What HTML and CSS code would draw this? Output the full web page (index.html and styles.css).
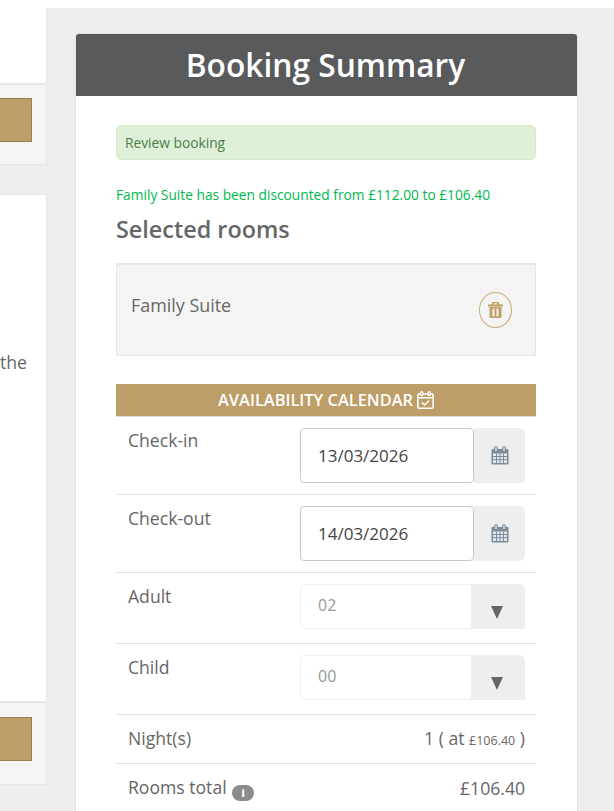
FILE: index.html
```html
<!DOCTYPE html>
<html lang="en">

<head>
    <meta charset="UTF-8" />
    <meta name="viewport" content="width=device-width, initial-scale=1.0" />
    <title>Booking Summary</title>
    <link rel="stylesheet" href="styles.css">
</head>

<body>

    <div class="page">
        <div class="rooms-col">
            <div class="room-card">
                <div class="room-body first"></div>
                <div class="room-foot"><a href="#" class="gold-btn"></a></div>
            </div>
            <div class="room-card second-card">
                <div class="room-body second"><p>the</p></div>
                <div class="room-foot last"><a href="#" class="gold-btn"></a></div>
            </div>
        </div>

        <div class="summary">
            <h1>Booking Summary</h1>

            <div class="summary-body">
                <div class="alert">Review booking</div>
                <p class="discount">Family Suite has been discounted from £112.00 to £106.40</p>
                <h2>Selected rooms</h2>

                <div class="selected-room">
                    <span>Family Suite</span>
                    <a href="#" class="trash">
                        <svg viewBox="0 0 15 16" width="15" height="16">
                            <path fill-rule="evenodd" d="M4.500 0h6l1 2.500h3.500v2H0v-2h3.500zM6 1.300 5.500 2.500h4L9 1.300z" fill="#c09f66" />
                            <path fill-rule="evenodd" d="M1.500 5h12v9.800a1.200 1.200 0 0 1-1.200 1.200H2.700a1.200 1.200 0 0 1-1.200-1.200zM4.500 6.500v8h2v-8zM8.500 6.500v8h2v-8z" fill="#c09f66" />
                        </svg>
                    </a>
                </div>

                <div class="calendar-title">
                    AVAILABILITY CALENDAR
                    <svg viewBox="0 0 17 18" width="17" height="18">
                        <rect x="0.800" y="3" width="15.400" height="14.200" rx="1.500" fill="none" stroke="#fff" stroke-width="1.600" />
                        <path d="M1 6.800h15" stroke="#fff" stroke-width="1.500" />
                        <rect x="3.700" y="0.700" width="2.100" height="4" rx="1" fill="#bd9e68" stroke="#fff" stroke-width="1.200" />
                        <rect x="11.200" y="0.700" width="2.100" height="4" rx="1" fill="#bd9e68" stroke="#fff" stroke-width="1.200" />
                        <path d="M4.800 11.500l2.700 2.500 4.700-4.500" fill="none" stroke="#fff" stroke-width="1.500" />
                    </svg>
                </div>

                <div class="row row-date">
                    <label>Check-in</label>
                    <div class="field">
                        <input type="text" value="13/03/2026" class="date-input" />
                        <span class="addon">
                            <svg width="18" height="19"><use href="#cal" /></svg>
                        </span>
                    </div>
                </div>

                <div class="row row-date">
                    <label>Check-out</label>
                    <div class="field">
                        <input type="text" value="14/03/2026" class="date-input" />
                        <span class="addon">
                            <svg width="18" height="19"><use href="#cal" /></svg>
                        </span>
                    </div>
                </div>

                <div class="row row-select">
                    <label>Adult</label>
                    <div class="select">
                        <span class="select-value">02</span>
                        <span class="select-arrow"></span>
                    </div>
                </div>

                <div class="row row-select">
                    <label>Child</label>
                    <div class="select">
                        <span class="select-value">00</span>
                        <span class="select-arrow"></span>
                    </div>
                </div>

                <div class="row row-total">
                    <span>Night(s)</span>
                    <span>1 ( at <small>£106.40</small> )</span>
                </div>

                <div class="row row-total no-line">
                    <span>Rooms total <i class="info">i</i></span>
                    <span>£106.40</span>
                </div>
            </div>
        </div>
    </div>

    <svg width="0" height="0" class="defs">
        <symbol id="cal" viewBox="0 0 18 19">
            <rect x="0.500" y="3" width="17" height="15.500" rx="1" fill="#7f8a94" />
            <path d="M2 7.500h14v9.500H2z" fill="#dfe9f3" />
            <path d="M2 10.500h14M2 13.700h14M5.500 7.500v9.500M9 7.500v9.500M12.500 7.500v9.500" stroke="#7f8a94" stroke-width="1" />
            <rect x="3.600" y="0.600" width="2.800" height="5" rx="1.200" fill="#c6d6e6" stroke="#7f8a94" stroke-width="1" />
            <rect x="11.600" y="0.600" width="2.800" height="5" rx="1.200" fill="#c6d6e6" stroke="#7f8a94" stroke-width="1" />
        </symbol>
    </svg>

</body>

</html>
```

FILE: styles.css
```css
* {
    box-sizing: border-box;
    font-family: 'Open Sans', 'Liberation Sans', sans-serif;
}

html,
body {
    margin: 0;
    height: 100%;
    overflow: hidden;
    background-color: white;
}

.page {
    display: flex;
    margin-top: 8px;
    height: 803px;
    background-color: #eeeeee;
    color: #666;
}

.defs {
    display: none;
}

/* left column, only its right edge is in view */
.rooms-col {
    width: 47px;
    flex-shrink: 0;
}

.room-card {
    border-right: 1px solid #e6e6e6;
    margin-bottom: 29px;
}

.second-card {
    border-top: 1px solid #e6e6e6;
}

.room-body {
    background-color: white;
}

.room-body.first {
    height: 75px;
}

.room-body.second {
    height: 506px;
    padding-top: 155px;
}

.room-body p {
    margin: 0;
    font-size: 17.600px;
    line-height: 24px;
    text-align: right;
    padding-right: 19px;
}

.room-foot {
    background-color: #f4f4f4;
    border-top: 2px solid #e6e6e6;
    border-bottom: 1px solid #e6e6e6;
    height: 82px;
    padding-top: 13px;
}

.room-foot.last {
    height: 84px;
    padding-top: 14px;
}

.gold-btn {
    display: block;
    width: 33px;
    height: 44px;
    margin-left: -1px;
    background-color: #bd9e68;
    border: 1px solid #9a7d4c;
}

/* booking summary */
.summary {
    margin: 25px 0 0 28px;
    width: 503px;
    background-color: white;
    border: 1px solid #e2e2e2;
    border-bottom: none;
    border-radius: 4px 4px 0 0;
}

.summary h1 {
    margin: 0;
    height: 62px;
    line-height: 62px;
    padding-right: 2px;
    background-color: #585a5c;
    color: white;
    font-size: 31.700px;
    font-weight: 600;
    text-align: center;
    border-radius: 3px 3px 0 0;
}

.summary-body {
    padding: 29px 41px 0 40px;
}

.alert {
    height: 35px;
    line-height: 34px;
    padding-left: 8px;
    background-color: #dff0d8;
    border: 1px solid #d6e9c6;
    border-radius: 5px;
    color: #4a7f4b;
    font-size: 13.750px;
}

.discount {
    margin: 25px 0 0;
    font-size: 13.750px;
    line-height: 20px;
    color: #00b84f;
}

.summary h2 {
    margin: 7px 0 0;
    font-size: 23.400px;
    line-height: 35px;
    font-weight: 600;
    color: #666;
}

.selected-room {
    margin-top: 16px;
    height: 93px;
    display: flex;
    justify-content: space-between;
    padding: 28px 23px 0 14px;
    background-color: #f4f4f4;
    border: 1px solid #e6e6e6;
    border-top-width: 2px;
    font-size: 17.900px;
    line-height: 24px;
}

.trash {
    width: 33px;
    height: 36px;
    margin-top: -1px;
    display: flex;
    align-items: center;
    justify-content: center;
    border: 1px solid #c9ab7a;
    border-radius: 50%;
}

.calendar-title {
    margin-top: 28px;
    height: 33px;
    padding-bottom: 1px;
    display: flex;
    align-items: center;
    justify-content: center;
    gap: 4px;
    background-color: #bd9e68;
    border-bottom: 1px solid #e0dcd4;
    color: white;
    font-size: 16.400px;
    font-weight: 600;
}

.row {
    display: flex;
    justify-content: space-between;
    padding: 11px 11px 0 12px;
    border-bottom: 1px solid #e2e2e2;
    font-size: 17.600px;
}

.row label {
    line-height: 24px;
}

.row-date {
    height: 78px;
}

.row-select {
    height: 71px;
}

.row-total {
    height: 49px;
    padding-top: 0;
    padding-bottom: 2px;
    align-items: center;
}

.no-line {
    border-bottom: none;
}

.field {
    display: flex;
    width: 225px;
    height: 55px;
}

.date-input {
    width: 174px;
    height: 55px;
    padding: 0 17px;
    border: 1px solid #c8c8c8;
    border-radius: 4px;
    font-size: 17px;
    color: #444;
    background-color: white;
    outline: none;
}

.addon {
    flex: 1;
    display: flex;
    align-items: center;
    justify-content: center;
    background-color: #eeeeee;
    border-radius: 0 5px 5px 0;
}

.select {
    display: flex;
    width: 225px;
    height: 45px;
    border: 1px solid #f0f0f0;
    border-radius: 5px;
    align-items: stretch;
    justify-content: space-between;
}

.select-value {
    padding-left: 17px;
    line-height: 41px;
    font-size: 16px;
    color: #999;
}

.select-arrow {
    width: 54px;
    margin: 0 -1px -1px 0;
    background-color: #eeeeee;
    border-radius: 0 5px 0 0;
    position: relative;
}

.select-arrow::after {
    content: '';
    position: absolute;
    left: 20px;
    top: 21px;
    border-top: 13px solid #666;
    border-left: 6.500px solid transparent;
    border-right: 6.500px solid transparent;
}

.row-total small {
    font-size: 12.500px;
}

.info {
    display: inline-block;
    width: 22px;
    height: 16px;
    margin-left: 1px;
    border-radius: 8px;
    background-color: #8c8c8c;
    color: white;
    font-size: 10px;
    font-weight: 800;
    font-style: normal;
    line-height: 16px;
    text-align: center;
    vertical-align: -3px;
}
```
